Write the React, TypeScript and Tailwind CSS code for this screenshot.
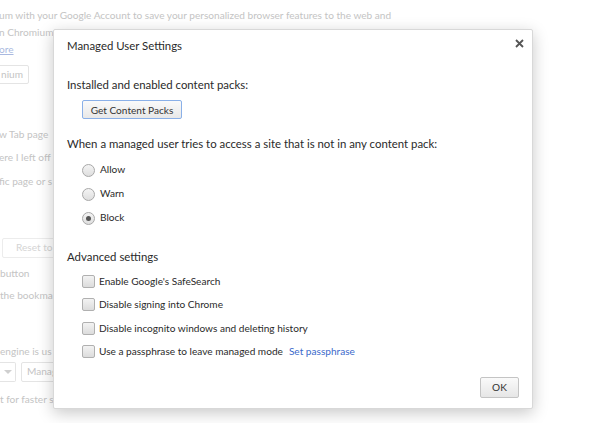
import React from "react";

const font = { fontFamily: 'Lato, "Liberation Sans", Arial, sans-serif' };

function Radio({ checked, label }: { checked?: boolean; label: string }) {
  return (
    <label className="flex h-[24px] items-center gap-[5px]">
      <span className="flex h-[13px] w-[13px] items-center justify-center rounded-full border border-[#a8a8a8] bg-gradient-to-b from-[#f4f4f4] to-[#dedede]">
        {checked && <span className="h-[5px] w-[5px] rounded-full bg-[#555]" />}
      </span>
      <span>{label}</span>
    </label>
  );
}

function Check({ label, children }: { label: string; children?: React.ReactNode }) {
  return (
    <label className="flex h-[23.3px] items-center gap-[4px]">
      <span className="h-[13px] w-[13px] rounded-[2px] border border-[#b0b0b0] bg-gradient-to-b from-[#f3f3f3] to-[#dcdcdc]" />
      <span>{label}</span>
      {children}
    </label>
  );
}

export default function App() {
  return (
    <div className="relative h-[423px] w-[589px] overflow-hidden bg-white text-[10.1px]" style={font}>
      {/* faded settings page behind the overlay */}
      <div className="flex flex-col whitespace-nowrap text-[10.1px] text-[#c4c4c4]">
        <div className="mt-[8px] ml-[-1px] h-[17px]">um with your Google Account to save your personalized browser features to the web and</div>
        <div className="ml-[-1px] h-[17px]">n Chromium c</div>
        <div className="ml-[-1px] h-[17px] text-[#a9b9e0] underline">ore</div>
        <div className="mt-[6px] ml-[-4px] flex h-[19px] w-[33px] items-center rounded-[2px] border border-[#e4e4e4] pl-[4px]">nium</div>
        <div className="mt-[43px] ml-[-1px] h-[23px]">w Tab page</div>
        <div className="ml-[-1px] h-[24px]">ere I left off</div>
        <div className="ml-[-1px] h-[24px]">fic page or s</div>
        <div className="mt-[40px] ml-[2px] flex h-[20px] w-[80px] items-center rounded-[2px] border border-[#ececec] pl-[13px] text-[#d4d4d4]">Reset to d</div>
        <div className="mt-[8px] h-[22px]">button</div>
        <div className="h-[23px]">the bookma</div>
        <div className="mt-[33px] h-[17px]">engine is us</div>
        <div className="mt-[1px] flex h-[20px] gap-[5px]">
          <div className="flex w-[16px] items-center justify-center rounded-r-[2px] border border-l-0 border-[#e4e4e4]">
            <span className="h-0 w-0 border-x-[4px] border-t-[4px] border-x-transparent border-t-[#cfcfcf]" />
          </div>
          <div className="flex items-center rounded-[2px] border border-[#e4e4e4] pl-[5px] pr-[20px]">Manag</div>
        </div>
        <div className="mt-[10px] h-[17px]">t for faster s</div>
      </div>

      {/* dialog overlay */}
      <div className="absolute left-[53px] top-[29px] flex h-[380px] w-[480px] flex-col rounded-[2px] border border-[#d8d8d8] bg-white pl-[13px] text-[10.1px] text-[#2a2a2a] shadow-[0_4px_16px_rgba(0,0,0,0.22)]">
        <div className="flex items-center justify-between pr-[8px] pt-[7px]">
          <div className="text-[11.4px] leading-[17px]">Managed User Settings</div>
          <svg width="9" height="9" viewBox="0 0 9 9" className="mt-[-4px]">
            <path d="M1 1 L8 8 M8 1 L1 8" stroke="#555" strokeWidth="1.8" />
          </svg>
        </div>

        <div className="mt-[22px] text-[11.4px] leading-[17px]">Installed and enabled content packs:</div>
        <button className="ml-[15px] mt-[7px] h-[19px] w-[100px] whitespace-nowrap rounded-[2px] border border-[#8ab0e8] bg-gradient-to-b from-[#fafafa] to-[#e8e8e8] text-[10.1px] leading-[16px] text-[#333]">
          Get Content Packs
        </button>

        <div className="mt-[16px] text-[11.4px] leading-[17px]">When a managed user tries to access a site that is not in any content pack:</div>
        <div className="ml-[15px] mt-[6px] flex flex-col">
          <Radio label="Allow" />
          <Radio label="Warn" />
          <Radio checked label="Block" />
        </div>

        <div className="mt-[18px] text-[11.4px] leading-[17px]">Advanced settings</div>
        <div className="ml-[15px] mt-[5px] flex flex-col">
          <Check label="Enable Google's SafeSearch" />
          <Check label="Disable signing into Chrome" />
          <Check label="Disable incognito windows and deleting history" />
          <Check label="Use a passphrase to leave managed mode">
            <span className="ml-[2px] text-[#3b6acb]">Set passphrase</span>
          </Check>
        </div>

        <div className="mt-auto flex justify-end pb-[10px] pr-[13px]">
          <button className="h-[21px] w-[39px] rounded-[2px] border border-[#c4c4c4] bg-gradient-to-b from-[#fafafa] to-[#e6e6e6] text-[10.1px] text-[#333]">
            OK
          </button>
        </div>
      </div>
    </div>
  );
}
